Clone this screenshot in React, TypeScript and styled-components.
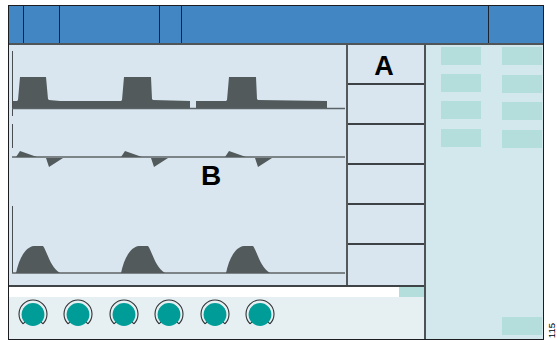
import React from "react";
import styled, { createGlobalStyle } from "styled-components";

const Global = createGlobalStyle`
  html, body { margin: 0; padding: 0; background: #ffffff; }
  body { font-family: "Liberation Sans", Arial, sans-serif; }
`;

const Page = styled.div`
  display: flex;
  align-items: flex-end;
  padding: 4px 0 0 8px;
  width: 557px;
  height: 340px;
  box-sizing: border-box;
`;

const Frame = styled.div`
  width: 537px;
  height: 335px;
  box-sizing: border-box;
  border: 1px solid #1b1d20;
  display: flex;
  flex-direction: column;
`;

const Header = styled.div`
  height: 39px;
  box-sizing: border-box;
  background: #4286c4;
  border-bottom: 2px solid #505558;
  display: grid;
  grid-template-columns: 15px 36px 100px 22px 307px 1fr;
`;

const HeaderCell = styled.div<{ $last?: boolean }>`
  border-right: ${(p) => (p.$last ? "none" : "1px solid #1a2430")};
`;

const Body = styled.div`
  flex: 1;
  display: grid;
  grid-template-columns: 417px 1fr;
  min-height: 0;
`;

const Left = styled.div`
  display: flex;
  flex-direction: column;
  border-right: 2px solid #4d5255;
`;

const Top = styled.div`
  height: 242px;
  box-sizing: border-box;
  border-bottom: 2px solid #3f4447;
  display: grid;
  grid-template-columns: 339px 1fr;
  background: #d9e6ef;
`;

const Chart = styled.div`
  position: relative;
  border-right: 2px solid #55595c;
`;

const ChartSvg = styled.svg`
  display: block;
`;

const ChartLabel = styled.span`
  position: absolute;
  left: 192px;
  top: 117px;
  font-size: 28px;
  line-height: 1;
  font-weight: 700;
  color: #000;
`;

const ColumnA = styled.div`
  display: flex;
  flex-direction: column;
`;

const ACell = styled.div<{ $last?: boolean }>`
  height: 40px;
  box-sizing: border-box;
  border-bottom: ${(p) => (p.$last ? "none" : "2px solid #3e4245")};
  display: flex;
  justify-content: center;
  align-items: flex-start;
  padding: 8px 4px 0 0;
  font-size: 27px;
  font-weight: 700;
  line-height: 1;
  color: #000;
`;

const Strip = styled.div`
  height: 10px;
  display: flex;
  background: #ffffff;
`;

const StripSpacer = styled.div`
  flex: 1;
`;

const StripTab = styled.div`
  width: 25px;
  background: #b4dedb;
`;

const KnobRow = styled.div`
  flex: 1;
  background: #e6eff2;
  display: flex;
  align-items: flex-start;
  gap: 13.4px;
  padding: 1px 0 0 8px;
`;

const KnobSvg = styled.svg`
  display: block;
  flex: none;
`;

const Right = styled.div`
  background: #d3e8ec;
  display: flex;
  flex-direction: column;
  padding: 2px 1px 4px 0;
`;

const Tiles = styled.div`
  display: grid;
  grid-template-columns: 40px 40px;
  column-gap: 21px;
  row-gap: 8.5px;
  padding-left: 15px;
`;

const Tile = styled.div<{ $shift?: number }>`
  height: 18px;
  background: #b4dedb;
  margin-top: ${(p) => p.$shift ?? 0}px;
`;

const BottomTile = styled(Tile)`
  width: 40px;
  margin-top: auto;
  align-self: flex-end;
`;

const Code = styled.div`
  width: 12px;
  font-size: 9.5px;
  line-height: 1;
  color: #000;
  writing-mode: vertical-rl;
  transform: rotate(180deg);
  padding-right: 3px;
  margin-bottom: 2px;
`;

const WAVE = "#525a5c";
const LINE = "#5c6366";

const pulse =
  "M4 63 L4 56 L8 56 L9 55 L11 32 L37 32 L39 54 L40 55 L51 56 L112 56 L113 55 L115 32 L142 32 L143 54 L144 55 L181 56 L181 63 L187 63 L187 56 L217 56 L218 55 L220 32 L247 32 L248 54 L249 55 L318 56 L318 63 Z";

const tri = (dx: number) =>
  `M${7 + dx} 112 L${11 + dx} 106 L${28 + dx} 112 Z M${37 + dx} 113 L${54 + dx} 113 L${40 + dx} 122 Z`;

const hump = (dx: number) =>
  `M${7 + dx} 228 C${10 + dx} 214 ${16 + dx} 202 ${25 + dx} 201 L${34 + dx} 201 C${38 + dx} 206 ${41 + dx} 222 ${51 + dx} 228 Z`;

const Knob: React.FC = () => (
  <KnobSvg width="32" height="32" viewBox="0 0 32 32">
    <path
      d="M6.1 25.9 A14 14 0 1 1 25.9 25.9"
      fill="none"
      stroke="#2e3133"
      strokeWidth="1.1"
    />
    <path d="M6.1 25.9 L8.2 23.6 M25.9 25.9 L23.8 23.6" stroke="#2e3133" strokeWidth="1.1" />
    <circle cx="16" cy="16.5" r="11.4" fill="#009c98" />
  </KnobSvg>
);

export default function App() {
  return (
    <>
      <Global />
      <Page>
        <Frame>
          <Header>
            <HeaderCell />
            <HeaderCell />
            <HeaderCell />
            <HeaderCell />
            <HeaderCell />
            <HeaderCell $last />
          </Header>
          <Body>
            <Left>
              <Top>
                <Chart>
                  <ChartSvg width="337" height="240" viewBox="0 0 337 240">
                    <g stroke="#4a4f52" strokeWidth="1">
                      <line x1="3.5" y1="6" x2="3.5" y2="71" />
                      <line x1="3.5" y1="79" x2="3.5" y2="103" />
                      <line x1="3.5" y1="161" x2="3.5" y2="228" />
                    </g>
                    <path d={pulse} fill={WAVE} />
                    <g stroke={LINE} strokeWidth="1.5">
                      <line x1="3" y1="63.5" x2="336" y2="63.5" />
                      <line x1="3" y1="112" x2="336" y2="112" />
                      <line x1="3" y1="228" x2="336" y2="228" />
                    </g>
                    <path d={tri(0) + tri(105) + tri(209)} fill={WAVE} />
                    <path d={hump(0) + hump(105) + hump(210)} fill={WAVE} />
                  </ChartSvg>
                  <ChartLabel>B</ChartLabel>
                </Chart>
                <ColumnA>
                  <ACell>A</ACell>
                  <ACell />
                  <ACell />
                  <ACell />
                  <ACell />
                  <ACell $last />
                </ColumnA>
              </Top>
              <Strip>
                <StripSpacer />
                <StripTab />
              </Strip>
              <KnobRow>
                {Array.from({ length: 6 }).map((_, i) => (
                  <Knob key={i} />
                ))}
              </KnobRow>
            </Left>
            <Right>
              <Tiles>
                <Tile />
                <Tile />
                <Tile />
                <Tile $shift={1} />
                <Tile />
                <Tile $shift={1} />
                <Tile />
                <Tile $shift={1} />
              </Tiles>
              <BottomTile />
            </Right>
          </Body>
        </Frame>
        <Code>115</Code>
      </Page>
    </>
  );
}
